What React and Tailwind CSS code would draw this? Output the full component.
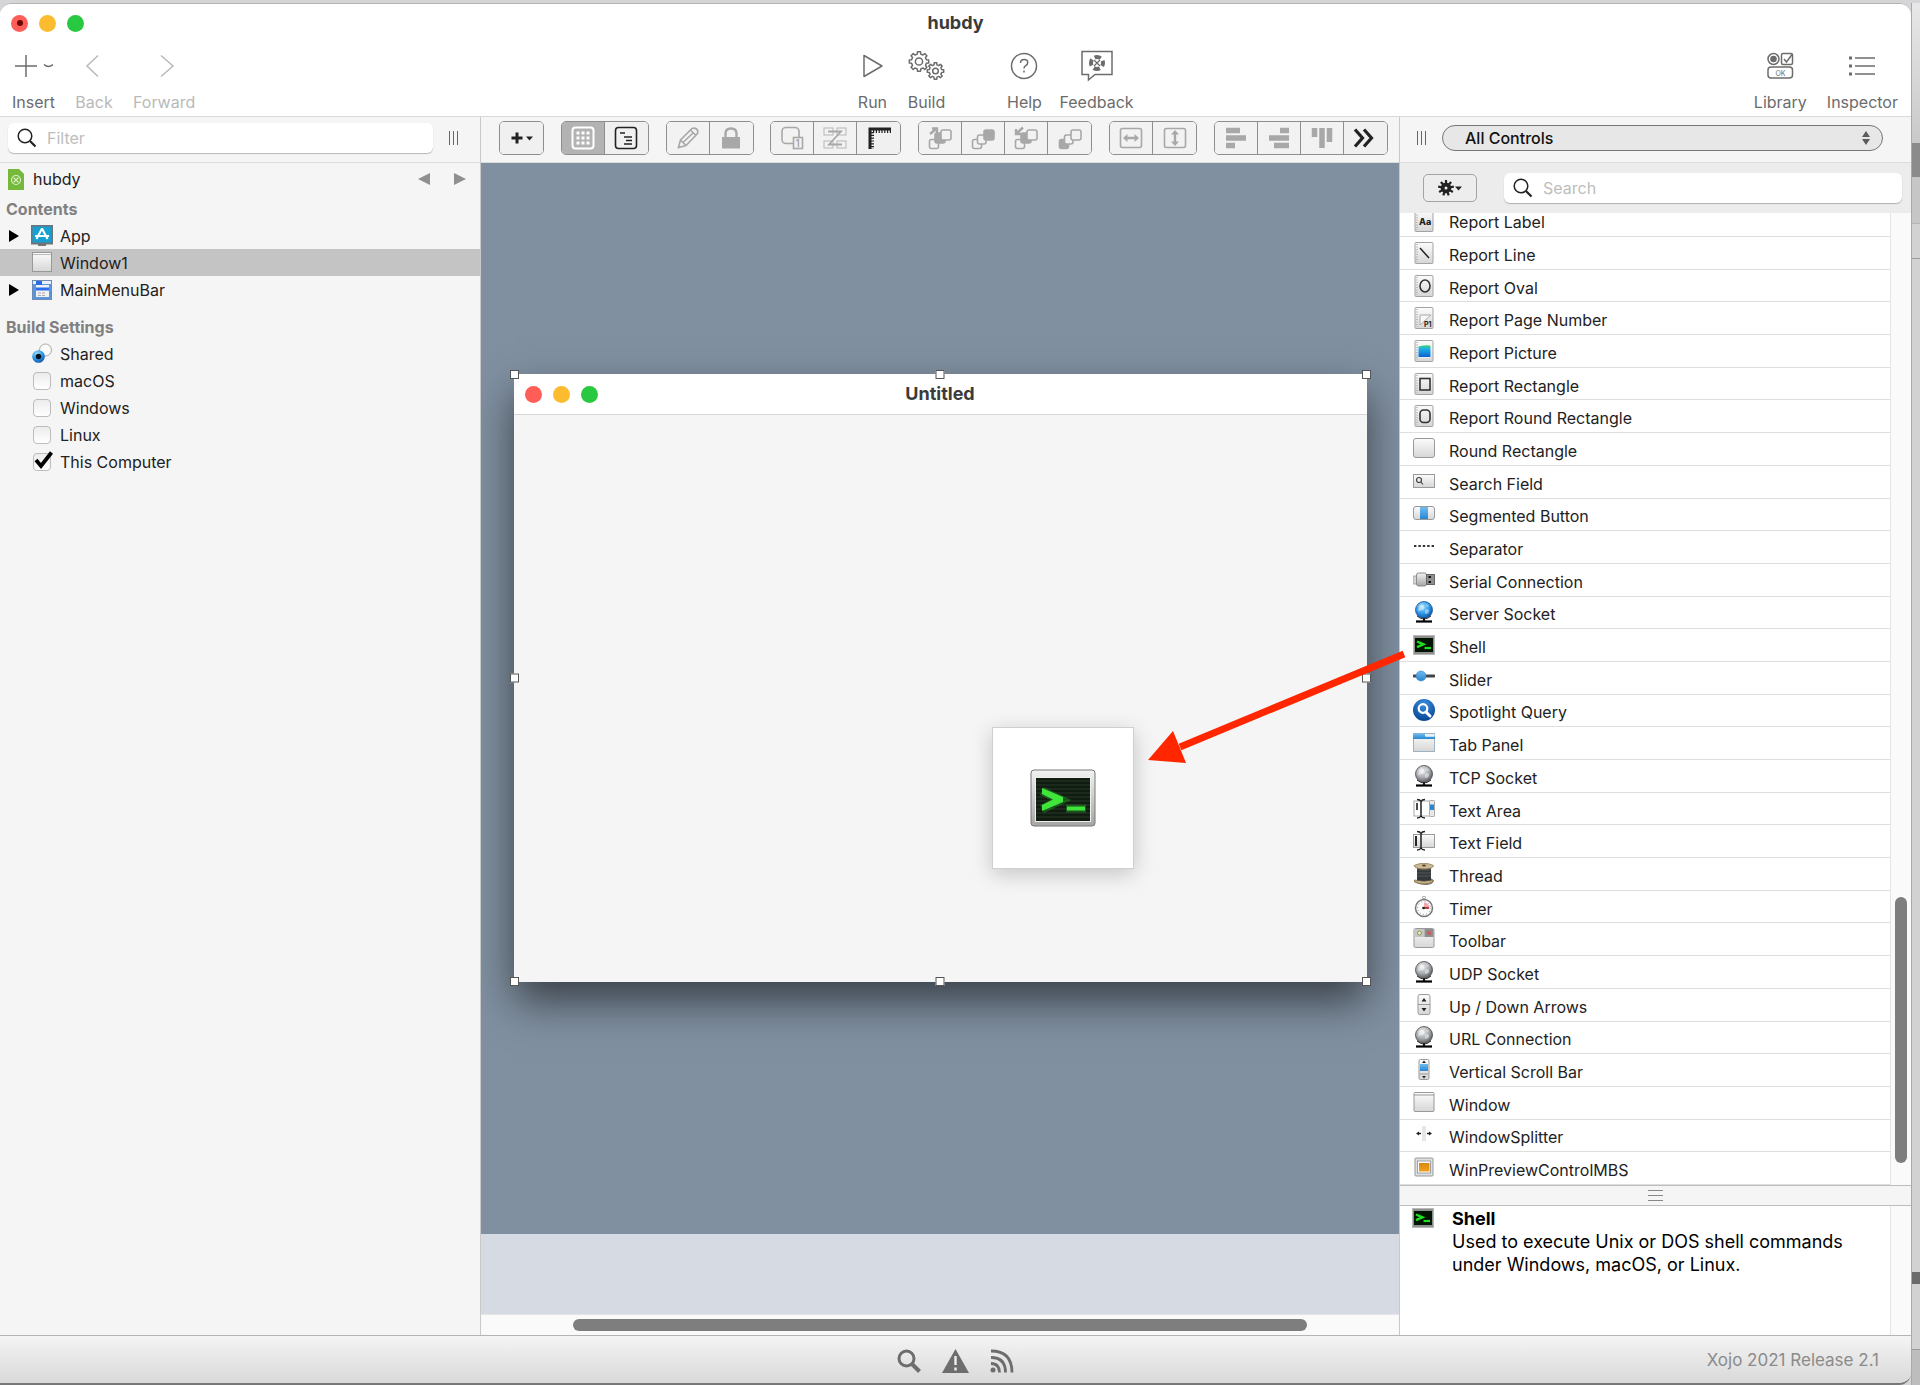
import React from 'react';

// outline of a cog wheel, teeth evenly spread round the centre
function gearPath(cx, cy, outer, inner, teeth) {
    const points = [];
    const step = (Math.PI * 2) / teeth;
    for (let i = 0; i < teeth; i++) {
        const a = i * step - Math.PI / 2;
        [[-0.3, inner], [-0.2, outer], [0.2, outer], [0.3, inner]].forEach(([k, r]) => {
            points.push(`${(cx + r * Math.cos(a + k * step)).toFixed(2)} ${(cy + r * Math.sin(a + k * step)).toFixed(2)}`);
        });
    }
    return `M${points.join('L')}Z`;
}

function SharedGradients() {
    return (
        <svg className="absolute size-0" aria-hidden="true">
            <defs>
                <linearGradient id="paper" x1="0" y1="0" x2="0" y2="1">
                    <stop offset="0" stopColor="#fcfcfc" />
                    <stop offset="1" stopColor="#d6d6d6" />
                </linearGradient>
                <linearGradient id="metal" x1="0" y1="0" x2="0" y2="1">
                    <stop offset="0" stopColor="#f2f2f2" />
                    <stop offset="1" stopColor="#a6a6a6" />
                </linearGradient>
                <linearGradient id="blue" x1="0" y1="0" x2="0" y2="1">
                    <stop offset="0" stopColor="#6cbcf0" />
                    <stop offset="1" stopColor="#2b86d0" />
                </linearGradient>
                <linearGradient id="picture" x1="0" y1="0" x2="0" y2="1">
                    <stop offset="0" stopColor="#3fd668" />
                    <stop offset="0.3" stopColor="#1fb0e8" />
                    <stop offset="1" stopColor="#0b62cf" />
                </linearGradient>
                <linearGradient id="orange" x1="0" y1="0" x2="0" y2="1">
                    <stop offset="0" stopColor="#d98a0c" />
                    <stop offset="1" stopColor="#f0a01c" />
                </linearGradient>
                <radialGradient id="globeBlue" cx="0.4" cy="0.3" r="0.8">
                    <stop offset="0" stopColor="#a5e2fb" />
                    <stop offset="0.5" stopColor="#2f9be6" />
                    <stop offset="1" stopColor="#0a3f94" />
                </radialGradient>
                <radialGradient id="globeGray" cx="0.4" cy="0.3" r="0.8">
                    <stop offset="0" stopColor="#f0f0f0" />
                    <stop offset="0.5" stopColor="#a8abb0" />
                    <stop offset="1" stopColor="#46484c" />
                </radialGradient>
                <radialGradient id="spotlight" cx="0.5" cy="0.25" r="0.8">
                    <stop offset="0" stopColor="#3d8fe0" />
                    <stop offset="1" stopColor="#04408f" />
                </radialGradient>
            </defs>
        </svg>
    );
}

function Icon({ size = 'size-[22px]', box = '0 0 22 22', children }) {
    return (
        <svg className={`${size} shrink-0`} viewBox={box} fill="none" aria-hidden="true">
            {children}
        </svg>
    );
}

/* ---------- library icons ---------- */

function ReportPage({ children }) {
    return (
        <Icon>
            <rect x="2" y="0.5" width="18" height="21" rx="1" fill="url(#paper)" stroke="#a3a3a3" />
            <path d="M4 2v18" stroke="#8d8d8d" strokeDasharray="1 1.5" />
            {children}
        </Icon>
    );
}

function Globe({ fill, base }) {
    return (
        <Icon>
            <circle cx="11" cy="9" r="8.5" fill={fill} stroke={base} strokeWidth="0.7" />
            <path d="M6 5q3-3 5 0t-2 4-4 2zM12 9q4-2 4 1t-4 3zM13 3l3 2-2 1z" fill="#fff" opacity="0.45" />
            <path d="M4 15q7 6 14 0" stroke="#333" strokeWidth="1" />
            <path d="M11 17.500v3" stroke="#111" strokeWidth="2" />
            <path d="M3 20.500h16" stroke="#000" strokeWidth="2.200" />
        </Icon>
    );
}

function Terminal() {
    return (
        <Icon>
            <rect x="0.5" y="1.5" width="21" height="19" fill="#8f8f8f" stroke="#b9b9b9" />
            <rect x="2" y="4" width="18" height="14" fill="#021502" />
            <path d="M4 7.500l6.500 2.800L4 13.200" stroke="#1ee01e" strokeWidth="2.400" />
            <path d="M11.500 14h6.500" stroke="#1ee01e" strokeWidth="2.200" />
        </Icon>
    );
}

function TextCursor() {
    return <path d="M4 1.500q3 0 4 2 1-2 4-2M8 3.500v15M4 20q3 0 4-2 1 2 4 2" stroke="#222" strokeWidth="1.500" />;
}

const libraryItems = [
    { name: 'Report Line', icon: <ReportPage><path d="M7 6l9 10" stroke="#222" strokeWidth="1.500" /></ReportPage> },
    { name: 'Report Oval', icon: <ReportPage><ellipse cx="12" cy="11" rx="5" ry="6" stroke="#333" strokeWidth="1.600" /></ReportPage> },
    {
        name: 'Report Page Number',
        icon: (
            <ReportPage>
                <path d="M7 8h11L7 18z" fill="#f7f7f7" stroke="#aaa" />
                <text x="11" y="20" fontSize="7" fontWeight="700" fill="#222" fontFamily="Inter, sans-serif">P1</text>
            </ReportPage>
        ),
    },
    {
        name: 'Report Picture',
        icon: (
            <ReportPage>
                <rect x="5.500" y="5" width="12.500" height="12.500" fill="#fff" />
                <path d="M5.500 6.500q6-2 12-1v11.500h-12z" fill="url(#picture)" />
            </ReportPage>
        ),
    },
    { name: 'Report Rectangle', icon: <ReportPage><rect x="7" y="5.500" width="10" height="11.500" stroke="#333" strokeWidth="1.600" /></ReportPage> },
    { name: 'Report Round Rectangle', icon: <ReportPage><rect x="7" y="5" width="10" height="12.500" rx="3.500" stroke="#333" strokeWidth="1.600" /></ReportPage> },
    { name: 'Round Rectangle', icon: <Icon><rect x="0.5" y="0.5" width="21" height="19" rx="2.500" fill="url(#paper)" stroke="#999" /></Icon> },
    {
        name: 'Search Field',
        icon: (
            <Icon>
                <rect x="0.5" y="3.500" width="21" height="13" fill="url(#paper)" stroke="#9a9a9a" />
                <circle cx="6" cy="9" r="2.500" stroke="#444" strokeWidth="1.200" />
                <path d="M8 11l2 2.500" stroke="#444" strokeWidth="1.200" />
            </Icon>
        ),
    },
    {
        name: 'Segmented Button',
        icon: (
            <Icon>
                <rect x="0.5" y="3.500" width="21" height="13" rx="2.500" fill="url(#paper)" stroke="#999" />
                <rect x="7" y="4" width="8" height="12" fill="url(#blue)" />
            </Icon>
        ),
    },
    { name: 'Separator', icon: <Icon><path d="M1 10h20" stroke="#333" strokeWidth="2" strokeDasharray="2.400 2" /></Icon> },
    {
        name: 'Serial Connection',
        icon: (
            <Icon>
                <path d="M0 7h4v8H0z" fill="#d5d5d5" stroke="#999" strokeWidth="0.800" />
                <rect x="3.500" y="4" width="10" height="13" rx="2" fill="url(#metal)" stroke="#8b8b8b" />
                <rect x="13.500" y="5.500" width="8" height="10" fill="#8f8f8f" stroke="#666" />
                <path d="M15.500 8h2.500M15.500 13h2.500" stroke="#111" strokeWidth="2" />
            </Icon>
        ),
    },
    { name: 'Server Socket', icon: <Globe fill="url(#globeBlue)" base="#0a3f94" /> },
    { name: 'Shell', icon: <Terminal /> },
    {
        name: 'Slider',
        icon: (
            <Icon>
                <path d="M1 9h20" stroke="#444" strokeWidth="3" strokeLinecap="round" />
                <circle cx="8" cy="9" r="5" fill="url(#blue)" stroke="#3b85bd" strokeWidth="0.600" />
            </Icon>
        ),
    },
    {
        name: 'Spotlight Query',
        icon: (
            <Icon>
                <circle cx="11" cy="11" r="11" fill="url(#spotlight)" />
                <circle cx="10" cy="9.500" r="4.300" stroke="#fff" strokeWidth="2.200" />
                <path d="M13 13l4 4" stroke="#fff" strokeWidth="3" strokeLinecap="round" />
            </Icon>
        ),
    },
    {
        name: 'Tab Panel',
        icon: (
            <Icon>
                <rect x="0.5" y="1.500" width="21" height="18" fill="url(#paper)" stroke="#9db2c2" />
                <path d="M0 1.500h12v3h10V7H0z" fill="url(#blue)" />
                <path d="M13 2h8.500v2.500H13z" fill="#e4f1fb" />
            </Icon>
        ),
    },
    { name: 'TCP Socket', icon: <Globe fill="url(#globeGray)" base="#333" /> },
    {
        name: 'Text Area',
        icon: (
            <Icon>
                <rect x="1" y="3" width="20" height="15" fill="#fff" stroke="#aaa" />
                <path d="M4 5v7" stroke="#111" strokeWidth="1.500" />
                <rect x="16.500" y="2.500" width="5" height="16" rx="1" fill="#e8e8e8" stroke="#aaa" />
                <rect x="17" y="6.500" width="4" height="5.500" fill="#2b86d0" />
                <TextCursor />
            </Icon>
        ),
    },
    {
        name: 'Text Field',
        icon: (
            <Icon>
                <rect x="0.5" y="4.500" width="21" height="13" fill="url(#paper)" stroke="#9a9a9a" />
                <path d="M3 6v10" stroke="#111" strokeWidth="1.800" />
                <TextCursor />
            </Icon>
        ),
    },
    {
        name: 'Thread',
        icon: (
            <Icon>
                <path d="M3 19q14 5 17-1l-2-2" stroke="#777" strokeWidth="1.500" />
                <rect x="4" y="4" width="14" height="14" fill="#33373a" />
                <path d="M4 7h14M4 10h14M4 13h14" stroke="#5d6164" strokeWidth="0.800" />
                <path d="M1 2.500Q11-2 20.500 2.500 20 6 11 6 2 6 1 2.500z" fill="#cdb995" stroke="#8d7a55" strokeWidth="0.800" />
                <path d="M1.500 17q9.500 3 18.500 0v2q-9 4-18.500 0z" fill="#c2ab83" stroke="#7d6b48" strokeWidth="0.800" />
                <ellipse cx="11" cy="2.500" rx="2" ry="1" fill="#5a4526" />
            </Icon>
        ),
    },
    {
        name: 'Timer',
        icon: (
            <Icon>
                <circle cx="11" cy="1.500" r="1.500" stroke="#999" />
                <circle cx="11" cy="12" r="8.500" fill="#fafafa" stroke="#777" strokeWidth="1.500" />
                <path d="M11 12V6.500a6 6 0 0 1 5.500 5.500z" fill="#f0a6aa" />
                <path d="M11 12h5" stroke="#a01818" strokeWidth="1.500" />
                <circle cx="11" cy="12" r="6.500" stroke="#777" strokeDasharray="0.700 2.700" />
                <circle cx="10.500" cy="12" r="1.300" fill="#222" />
            </Icon>
        ),
    },
    {
        name: 'Toolbar',
        icon: (
            <Icon>
                <rect x="1" y="0.500" width="20" height="19" rx="1.500" fill="url(#paper)" stroke="#999" />
                <rect x="1.500" y="1" width="10" height="8" fill="#c6c6c6" />
                <rect x="11.500" y="1" width="9" height="8" fill="#8e8e8e" />
                <circle cx="6.500" cy="5" r="2" fill="#e9efb2" stroke="#7b8a4a" strokeWidth="0.800" />
                <ellipse cx="16" cy="5" rx="2.500" ry="2" fill="#c9605d" />
            </Icon>
        ),
    },
    { name: 'UDP Socket', icon: <Globe fill="url(#globeGray)" base="#333" /> },
    {
        name: 'Up / Down Arrows',
        icon: (
            <Icon>
                <rect x="5" y="0.500" width="12" height="20" rx="2" fill="url(#paper)" stroke="#999" />
                <path d="M5 10.500h12" stroke="#999" />
                <path d="M11 4l2.500 3.500h-5zM11 17.500l2.500-3.500h-5z" fill="#222" />
            </Icon>
        ),
    },
    { name: 'URL Connection', icon: <Globe fill="url(#globeGray)" base="#333" /> },
    {
        name: 'Vertical Scroll Bar',
        icon: (
            <Icon>
                <rect x="6" y="0.500" width="10" height="20" rx="1.500" fill="url(#paper)" stroke="#999" />
                <rect x="7" y="5" width="8" height="7" fill="url(#blue)" />
                <path d="M6.500 15h9" stroke="#999" />
                <path d="M11 1.500l2 2.500H9zM11 19.500l2-2.500H9z" fill="#222" />
            </Icon>
        ),
    },
    {
        name: 'Window',
        icon: (
            <Icon>
                <rect x="1" y="0.500" width="20" height="19" rx="1" fill="url(#paper)" stroke="#999" />
                <path d="M1 3h20" stroke="#999" />
            </Icon>
        ),
    },
    {
        name: 'WindowSplitter',
        icon: (
            <Icon>
                <rect x="9" y="2" width="4" height="15" fill="#e6e6e6" />
                <path d="M8 9.500H5M14 9.500h3" stroke="#222" strokeWidth="1.400" />
                <path d="M3 9.500l3-2v4zM19 9.500l-3-2v4z" fill="#222" />
            </Icon>
        ),
    },
    {
        name: 'WinPreviewControlMBS',
        icon: (
            <Icon>
                <rect x="2" y="1" width="18" height="18" rx="1" fill="#dcdee1" stroke="#999" />
                <rect x="4.500" y="4" width="13" height="12" fill="#fff" stroke="#8d8d8d" strokeWidth="0.800" />
                <rect x="6" y="6" width="10.500" height="8.500" fill="url(#orange)" />
            </Icon>
        ),
    },
];

/* ---------- window chrome ---------- */

function TrafficLights({ edited }) {
    return (
        <div className="flex gap-[11px]">
            <button aria-label="Close" className="flex size-[17px] items-center justify-center rounded-full bg-[#ff5d58]">
                {edited && <span className="size-[6px] rounded-full bg-[#6b0804]" />}
            </button>
            <button aria-label="Minimize" className="size-[17px] rounded-full bg-[#fdbc2f]" />
            <button aria-label="Zoom" className="size-[17px] rounded-full bg-[#28c840]" />
        </div>
    );
}

function ToolbarButton({ label, disabled, children }) {
    return (
        <button disabled={disabled} className={`flex flex-col items-center gap-[9px] ${disabled ? 'text-[#b9b9b9]' : 'text-[#6c6c6c]'}`}>
            <svg className="h-[34px] w-[38px]" viewBox="0 0 38 34" fill="none" stroke="currentColor" strokeWidth="1.500" aria-hidden="true">
                {children}
            </svg>
            <span className="text-base leading-5">{label}</span>
        </button>
    );
}

function Header() {
    return (
        <header className="flex flex-col border-b border-[#dadada] bg-white">
            <div className="grid h-[38px] grid-cols-[1fr_auto_1fr] items-center px-[11px]">
                <TrafficLights edited />
                <h1 className="text-lg font-bold text-[#3b3b3b]">hubdy</h1>
            </div>
            <div className="flex items-start justify-between pt-[7px] pr-[13px] pb-1 pl-3">
                <div className="flex gap-5 pr-[38px]">
                    <ToolbarButton label="Insert">
                        <path d="M11 6v22M0 17h22M29 15.500q4.500 4 9 0" />
                    </ToolbarButton>
                    <ToolbarButton label="Back" disabled>
                        <path d="M23 6.500L12 17l11 10.500" />
                    </ToolbarButton>
                    <ToolbarButton label="Forward" disabled>
                        <path d="M16 6.500L28 17 16 27.500" />
                    </ToolbarButton>
                </div>
                <div className="flex gap-4">
                    <ToolbarButton label="Run">
                        <path d="M11 6.500v21L29 17z" strokeLinejoin="round" />
                    </ToolbarButton>
                    <ToolbarButton label="Build">
                        <path d={gearPath(12, 12.500, 9.800, 7.600, 8)} strokeLinejoin="round" />
                        <circle cx="12" cy="12.500" r="3.600" />
                        <path d={gearPath(28.500, 22, 8.300, 6.300, 8)} strokeLinejoin="round" />
                        <circle cx="28.500" cy="22" r="2.800" />
                    </ToolbarButton>
                    <span className="w-7" />
                    <ToolbarButton label="Help">
                        <circle cx="19" cy="17" r="12.500" />
                        <path d="M15.500 14q0-3.500 3.700-3.500 3.500 0 3.500 3 0 2-2 3.200-1.700 1-1.700 2.800M19 21.500v2" />
                    </ToolbarButton>
                    <ToolbarButton label="Feedback">
                        <path d="M4 2.500h30v23H17L10.500 31v-5.500H4z" />
                        <circle cx="19" cy="14" r="6" strokeWidth="4" strokeDasharray="6.400 3.020" strokeDashoffset="3.200" />
                        <path d="M16 11l6 6M22 11l-6 6" strokeWidth="1.200" />
                    </ToolbarButton>
                </div>
                <div className="flex gap-5">
                    <ToolbarButton label="Library">
                        <circle cx="12.500" cy="10" r="5.500" />
                        <circle cx="12.500" cy="10" r="3.300" fill="currentColor" stroke="none" />
                        <rect x="20.500" y="4.500" width="11" height="11" rx="1.500" />
                        <path d="M23 10l2.500 3L31 5.500" />
                        <rect x="7" y="18" width="24.500" height="11" rx="3" />
                        <text x="14.500" y="26.500" fontSize="7" fill="currentColor" stroke="none">OK</text>
                    </ToolbarButton>
                    <ToolbarButton label="Inspector">
                        <path d="M12 9h20M12 17h20M12 25h20" />
                        <path d="M6 9h3M6 17h3M6 25h3" strokeWidth="3" />
                    </ToolbarButton>
                </div>
            </div>
        </header>
    );
}

function Grip() {
    return (
        <span className="flex gap-[3px]">
            <span className="h-[14px] w-px bg-[#666]" />
            <span className="h-[14px] w-px bg-[#666]" />
            <span className="h-[14px] w-px bg-[#666]" />
        </span>
    );
}

function SearchBox({ id, label, className }) {
    return (
        <div className={`flex h-[30px] items-center gap-[10px] rounded-md bg-white pl-[9px] shadow-[0_1px_1px_rgba(0,0,0,0.25)] ${className}`}>
            <label htmlFor={id} aria-label={label}>
                <svg className="size-5 shrink-0" viewBox="0 0 20 20" fill="none" stroke="#222" aria-hidden="true">
                    <circle cx="8" cy="8" r="6.800" strokeWidth="1.500" />
                    <path d="M13 13l5.500 5.500" strokeWidth="2.200" />
                </svg>
            </label>
            <input id={id} type="text" placeholder={label} aria-label={label} className="min-w-0 flex-1 bg-transparent text-base outline-none placeholder:text-[#bdbdbd]" />
        </div>
    );
}

/* ---------- navigator ---------- */

function Disclosure({ name }) {
    return (
        <button aria-label={`Expand ${name}`} className="flex w-[14px] justify-center">
            <svg className="h-3 w-[10px]" viewBox="0 0 10 12" aria-hidden="true"><path d="M0 0l10 6-10 6z" fill="#000" /></svg>
        </button>
    );
}

function NavRow({ name, icon, selected, expandable }) {
    return (
        <li className={`flex h-[27px] items-center pl-[7px] ${selected ? 'bg-[#c4c4c4]' : ''}`}>
            {expandable ? <Disclosure name={name} /> : <span className="w-[14px]" />}
            <span className="ml-[10px] flex w-[22px] justify-center">{icon}</span>
            <span className="ml-[7px] text-base text-[#222]">{name}</span>
        </li>
    );
}

function BuildTarget({ name, checked }) {
    const id = `target-${name.replace(' ', '-')}`;
    return (
        <li className="flex h-[27px] items-center pl-[33px]">
            <span className="relative flex size-[18px]">
                <input
                    id={id}
                    type="checkbox"
                    defaultChecked={checked}
                    className="peer size-[18px] appearance-none rounded border border-[#bcbcbc] bg-gradient-to-b from-[#ececec] to-white"
                />
                <svg className="pointer-events-none absolute -top-[3px] left-0 hidden h-5 w-[21px] peer-checked:block" viewBox="0 0 21 20" fill="none" aria-hidden="true">
                    <path d="M3 10l5 6L18.500 2.500" stroke="#000" strokeWidth="3.800" />
                </svg>
            </span>
            <label htmlFor={id} className="ml-[9px] text-base text-[#222]">{name}</label>
        </li>
    );
}

function Navigator() {
    return (
        <aside className="relative z-10 flex w-[481px] shrink-0 flex-col border-r border-[#c9c9c9] bg-[#f5f5f5]">
            <div className="flex h-[46px] items-center gap-4 border-b border-[#dcdcdc] pr-[22px] pb-[3px] pl-2">
                <SearchBox id="filter" label="Filter" className="flex-1" />
                <Grip />
            </div>
            <div className="flex h-8 items-center pr-[14px] pl-2">
                <svg className="h-[21px] w-4" viewBox="0 0 16 21" fill="none" aria-hidden="true">
                    <path d="M0 0h11l5 5v16H0z" fill="#74b83c" />
                    <circle cx="8" cy="11" r="4.500" stroke="#d9f0c4" strokeWidth="1.200" />
                    <path d="M5.500 8.500l5 5M10.500 8.500l-5 5" stroke="#d9f0c4" strokeWidth="1.200" />
                </svg>
                <span className="ml-[9px] flex-1 text-base text-[#222]">hubdy</span>
                <div className="flex gap-6">
                    <button aria-label="Previous location">
                        <svg className="size-3" viewBox="0 0 12 12" aria-hidden="true"><path d="M12 0v12L0 6z" fill="#8f8f8f" /></svg>
                    </button>
                    <button aria-label="Next location">
                        <svg className="size-3" viewBox="0 0 12 12" aria-hidden="true"><path d="M0 0v12l12-6z" fill="#8f8f8f" /></svg>
                    </button>
                </div>
            </div>
            <h2 className="h-[27px] pl-[6px] text-base leading-7 font-bold text-[#808080]">Contents</h2>
            <ul>
                <NavRow
                    name="App"
                    expandable
                    icon={
                        <Icon>
                            <path d="M7 18h8v3H7z" fill="#777" />
                            <rect x="0.500" y="0.500" width="21" height="18" fill="#17a0d0" stroke="#6f7478" strokeWidth="2" />
                            <path d="M11 3.500L5.500 14M11 3.500L16.500 14M4 11h14" stroke="#fff" strokeWidth="2" />
                        </Icon>
                    }
                />
                <NavRow
                    name="Window1"
                    selected
                    icon={
                        <Icon>
                            <rect x="1.500" y="0.500" width="19" height="19" fill="url(#paper)" stroke="#999" />
                            <path d="M2 2.500h18" stroke="#bbb" />
                        </Icon>
                    }
                />
                <NavRow
                    name="MainMenuBar"
                    expandable
                    icon={
                        <Icon>
                            <rect x="1.500" y="1.500" width="19" height="19" fill="#5b95e0" stroke="#6d8cb5" />
                            <path d="M2 3.500h18" stroke="#e8f0fa" strokeWidth="3" />
                            <path d="M5 2h6v4H5z" fill="#2c6be0" />
                            <path d="M5 6h13v12H5z" fill="#f1f1f1" />
                            <path d="M5 10h13" stroke="#2a6ff0" strokeWidth="3" />
                            <path d="M7 14h7M7 16.500h8" stroke="#aaa" strokeDasharray="3 1" />
                        </Icon>
                    }
                />
            </ul>
            <h2 className="mt-[10px] h-[27px] pl-[6px] text-base leading-7 font-bold text-[#808080]">Build Settings</h2>
            <ul>
                <NavRow
                    name="Shared"
                    icon={
                        <Icon>
                            <circle cx="14.500" cy="7" r="6" fill="#fafafa" stroke="#aaa" />
                            <circle cx="7.500" cy="13.500" r="6.300" fill="url(#globeBlue)" />
                            <circle cx="7.500" cy="13.500" r="2.800" fill="#04121f" />
                        </Icon>
                    }
                />
                <BuildTarget name="macOS" />
                <BuildTarget name="Windows" />
                <BuildTarget name="Linux" />
                <BuildTarget name="This Computer" checked />
            </ul>
        </aside>
    );
}

/* ---------- layout editor ---------- */

function ToolGroup({ children }) {
    return <div className="flex h-[34px] divide-x divide-[#8e8e8e] overflow-hidden rounded-[5px] border border-[#8e8e8e]">{children}</div>;
}

function Tool({ label, tone = 'off', children }) {
    const tones = {
        off: 'bg-[#f2f2f2] text-[#a8a8a8]',
        on: 'bg-[#f0f0f0] text-[#222]',
        pressed: 'bg-[#b3b3b3] text-white',
    };
    return (
        <button aria-label={label} disabled={tone === 'off'} className={`flex w-[43px] items-center justify-center ${tones[tone]}`}>
            <svg className="size-6" viewBox="0 0 24 24" fill="none" stroke="currentColor" strokeWidth="1.600" aria-hidden="true">
                {children}
            </svg>
        </button>
    );
}

function StackedSquares({ front, middle, back }) {
    return (
        <>
            <rect x="1.500" y="13.500" width="9" height="9" rx="2" fill={front ? 'currentColor' : 'none'} />
            {middle && <rect x="7" y="7" width="10" height="10" rx="2" fill="currentColor" />}
            {!middle && <rect x="6.500" y="9" width="8.500" height="9" rx="2" fill="#f2f2f2" />}
            <rect x="13" y="4" width="10" height="10" rx="2" fill={back ? 'currentColor' : '#f2f2f2'} />
        </>
    );
}

function EditorToolbar() {
    return (
        <div className="flex h-[46px] items-center justify-between border-b border-[#dcdcdc] bg-[#f5f5f5] pr-[11px] pb-[3px] pl-[18px]">
            <ToolGroup>
                <Tool label="Add" tone="on">
                    <path d="M7 6.500v11M1.500 12h11" strokeWidth="3" />
                    <path d="M16 10.500h7l-3.500 4z" fill="currentColor" stroke="none" />
                </Tool>
            </ToolGroup>
            <ToolGroup>
                <Tool label="View layout" tone="pressed">
                    <rect x="1.500" y="1.500" width="21" height="21" rx="3" strokeWidth="2" />
                    <path d="M5.500 7h13M5.500 12h13M5.500 17h13" strokeWidth="3" strokeDasharray="3 2" />
                </Tool>
                <Tool label="View code" tone="on">
                    <rect x="1.500" y="1.500" width="21" height="21" rx="3" />
                    <path d="M6 7h5M10 11h8M12 14.500h6M10 18h8" />
                </Tool>
            </ToolGroup>
            <ToolGroup>
                <Tool label="Edit">
                    <path d="M2.500 21.500l2-7.500L16 2.500q2.500-1 4.500 .500t1 4.500L10 19.500zM4.500 14l5.500 5.500M14.500 4l5.500 5.500M7 16.500L17.500 6.500" />
                </Tool>
                <Tool label="Lock">
                    <path d="M3 11h18v11.500H3z" fill="currentColor" stroke="none" />
                    <path d="M6.500 12V7.500q0-5 5.500-5t5.500 5V12" strokeWidth="2.400" />
                </Tool>
            </ToolGroup>
            <ToolGroup>
                <Tool label="Tab order">
                    <rect x="2" y="1.500" width="17" height="16" rx="4" />
                    <rect x="13.500" y="11.500" width="9" height="11" fill="#f2f2f2" />
                    <text x="15.500" y="21" fontSize="10" fontWeight="600" fill="currentColor" stroke="none">1</text>
                </Tool>
                <Tool label="Show tab order">
                    <g strokeWidth="1" opacity="0.800">
                        <rect x="1" y="2" width="9" height="7" />
                        <rect x="14" y="2" width="9" height="7" />
                        <rect x="1" y="15" width="9" height="7" />
                        <rect x="14" y="15" width="9" height="7" />
                    </g>
                    <path d="M5 5.500h13L6 18.500h13" strokeWidth="1.800" />
                </Tool>
                <Tool label="Rulers" tone="on">
                    <path d="M3 23V3h21" strokeWidth="3" />
                    <path d="M6 5.500h18" strokeWidth="3" strokeDasharray="1.200 1.600" />
                    <path d="M5.500 6v17" strokeWidth="3" strokeDasharray="1.200 1.600" />
                </Tool>
            </ToolGroup>
            <ToolGroup>
                <Tool label="Move forward">
                    <StackedSquares middle />
                    <path d="M2 8l6-5M4 2.500h5v5" strokeWidth="2.400" />
                </Tool>
                <Tool label="Move to front">
                    <StackedSquares back />
                </Tool>
                <Tool label="Move backward">
                    <StackedSquares middle />
                    <path d="M9 1.500L3 7M2 3v5h5" strokeWidth="2.400" />
                </Tool>
                <Tool label="Move to back">
                    <StackedSquares front />
                </Tool>
            </ToolGroup>
            <ToolGroup>
                <Tool label="Fill width">
                    <rect x="1.500" y="2.500" width="21" height="19" rx="2" />
                    <path d="M6 12h12" strokeWidth="2.400" />
                    <path d="M4 12l4.500-4v8zM20 12l-4.500-4v8z" fill="currentColor" stroke="none" />
                </Tool>
                <Tool label="Fill height">
                    <rect x="1.500" y="2.500" width="21" height="19" rx="2" />
                    <path d="M12 7v10" strokeWidth="2.400" />
                    <path d="M12 4l-4 4.500h8zM12 20l-4-4.500h8z" fill="currentColor" stroke="none" />
                </Tool>
            </ToolGroup>
            <ToolGroup>
                <Tool label="Align left">
                    <path d="M2 4.500h14M2 12h20M2 19.500h9" strokeWidth="5.500" />
                </Tool>
                <Tool label="Align right">
                    <path d="M22 4.500h-9M22 12H2M22 19.500H7" strokeWidth="5.500" />
                </Tool>
                <Tool label="Align top">
                    <path d="M4.500 2v9M12 2v20M19.500 2v14" strokeWidth="5.500" />
                </Tool>
                <Tool label="More tools" tone="on">
                    <path d="M2 3.500l7.500 8.500L2 20.500M11 3.500l7.500 8.500-7.500 8.500" strokeWidth="3.200" />
                </Tool>
            </ToolGroup>
        </div>
    );
}

const handles = [
    '-top-1 -left-1',
    '-top-1 left-1/2 -translate-x-1/2',
    '-top-1 -right-1',
    'top-1/2 -left-1 -translate-y-1/2',
    'top-1/2 -right-1 -translate-y-1/2',
    '-bottom-1 -left-1',
    '-bottom-1 left-1/2 -translate-x-1/2',
    '-bottom-1 -right-1',
];

function DesignWindow() {
    return (
        <div className="relative h-[608px] w-[853px] bg-[#f5f5f5] shadow-[0_20px_40px_rgba(0,0,0,0.55)]">
            <div className="grid h-[41px] grid-cols-[1fr_auto_1fr] items-center border-b border-[#d6d6d6] bg-white px-[11px]">
                <TrafficLights />
                <h2 className="text-lg font-bold text-[#3b3b3b]">Untitled</h2>
            </div>
            {/* control being dropped on the form */}
            <div className="absolute top-[353px] left-[478px] flex size-[142px] items-center justify-center border border-[#cfcfcf] bg-white shadow-[0_5px_20px_rgba(0,0,0,0.2)]">
                <svg className="h-[58px] w-[66px]" viewBox="0 0 66 58" fill="none" aria-hidden="true">
                    <rect x="1" y="1" width="64" height="56" rx="3" fill="url(#metal)" stroke="#777" />
                    <rect x="5.500" y="8.500" width="55" height="44" fill="#101c10" stroke="#eee" />
                    {[12, 16, 20, 24, 28, 32, 36, 40, 44, 48].map(y => (
                        <path key={y} d={`M6 ${y}h54`} stroke="#28382a" />
                    ))}
                    <g stroke="#2fd12f" opacity="0.3">
                        <path d="M12 22l19 9-19 9" strokeWidth="9" />
                        <path d="M36 39.500h20" strokeWidth="8" />
                    </g>
                    <path d="M12 19v6l11 5.500L12 36v6l21-9v-5z" fill="#3fe53a" />
                    <path d="M37 39.500h18" stroke="#3fe53a" strokeWidth="4" />
                </svg>
            </div>
            {handles.map(place => (
                <span key={place} className={`absolute size-[9px] border border-[#555] bg-white ${place}`} />
            ))}
            <svg className="pointer-events-none absolute top-[270px] left-[630px] z-20 h-[122px] w-[264px]" viewBox="0 0 264 122" fill="#ff2600" aria-hidden="true">
                <path d="M36 103L260 10" stroke="#ff2600" strokeWidth="7" />
                <path d="M4 116L29 87l13 32z" />
            </svg>
        </div>
    );
}

function Editor() {
    return (
        <main className="flex min-w-0 flex-1 flex-col">
            <EditorToolbar />
            <div className="flex flex-1 justify-center bg-[#8090a1] pt-[211px] pb-10">
                <DesignWindow />
            </div>
            <div className="h-20 bg-[#d6dae2]" />
            <div className="border-t border-[#e4e4e4] bg-[#fafafa] px-[10%] py-1">
                <div className="h-3 rounded-full bg-[#7e7e7e]" />
            </div>
        </main>
    );
}

/* ---------- library ---------- */

function Library() {
    return (
        <aside className="relative flex w-[512px] shrink-0 flex-col border-l border-[#c9c9c9] bg-white">
            <div className="flex h-[46px] items-center gap-4 border-b border-[#dcdcdc] bg-[#f5f5f5] pr-7 pb-[3px] pl-[17px]">
                <Grip />
                <div className="relative flex-1">
                    <select aria-label="Library set" className="block h-[26px] w-full appearance-none rounded-full border border-[#767676] bg-[#e7e7e7] pl-[22px] text-base leading-5 font-medium text-[#111]">
                        <option>All Controls</option>
                    </select>
                    <svg className="pointer-events-none absolute top-[6px] right-[13px] h-[14px] w-2" viewBox="0 0 8 14" fill="#5c5c5c" aria-hidden="true">
                        <path d="M4 0l4 6H0zM4 14l4-6H0z" />
                    </svg>
                </div>
            </div>
            <div className="flex h-[50px] items-center justify-between bg-[#ececec] pr-[9px] pl-[23px]">
                <button aria-label="Library options" className="flex h-7 w-[54px] items-center justify-center rounded-[5px] border border-[#a3a3a3] bg-[#ededed]">
                    <svg className="h-4 w-6" viewBox="0 0 24 16" fill="#222" aria-hidden="true">
                        <path d={gearPath(8, 8, 8, 5.300, 9)} />
                        <circle cx="8" cy="8" r="1.500" fill="#ededed" />
                        <path d="M17 6.500h7l-3.500 4z" />
                    </svg>
                </button>
                <SearchBox id="library-search" label="Search" className="w-[398px]" />
            </div>
            <div className="flex flex-1">
                <ul className="flex flex-1 flex-col">
                    {/* scrolled half out of view */}
                    <li className="flex h-6 items-end gap-[14px] overflow-hidden border-b border-[#dedede] pb-1 pl-[13px]">
                        <ReportPage>
                            <text x="6" y="14.500" fontSize="9" fontWeight="800" fill="#222" fontFamily="Inter, sans-serif">Aa</text>
                        </ReportPage>
                        <span className="text-base leading-5 text-[#222]">Report Label</span>
                    </li>
                    {libraryItems.map(item => (
                        <li key={item.name} className="flex min-h-[30px] flex-1 items-center gap-[14px] border-b border-[#dedede] pl-[13px]">
                            {item.icon}
                            <span className="pt-1 text-base leading-5 text-[#222]">{item.name}</span>
                        </li>
                    ))}
                </ul>
                <div className="flex w-[21px] flex-col items-center justify-end border-l border-[#e4e4e4] bg-[#fafafa] pb-[22px]">
                    <div className="h-[266px] w-3 rounded-full bg-[#7e7e7e]" />
                </div>
            </div>
            <div className="flex h-[21px] flex-col items-center justify-center gap-1 border-y border-[#bdbdbd] bg-[#f5f5f5]">
                <span className="h-px w-[15px] bg-[#888]" />
                <span className="h-px w-[15px] bg-[#888]" />
                <span className="h-px w-[15px] bg-[#888]" />
            </div>
            <div className="flex h-[129px]">
                <div className="flex flex-1 gap-[18px] pt-px pl-3">
                    <Terminal />
                    <div className="text-lg leading-[23px] text-black">
                        <h3 className="font-bold">Shell</h3>
                        <p>Used to execute Unix or DOS shell commands<br />under Windows, macOS, or Linux.</p>
                    </div>
                </div>
                <div className="w-[21px] border-l border-[#e4e4e4] bg-[#fafafa]" />
            </div>
        </aside>
    );
}

function StatusBar() {
    return (
        <footer className="grid h-12 grid-cols-[1fr_auto_1fr] items-center border-t border-[#b5b5b5] bg-gradient-to-b from-[#f4f4f4] to-[#d9d9d9] px-8 pt-[2px]">
            <span />
            <div className="flex items-center gap-[21px] text-[#6d6d6d]">
                <button aria-label="Find">
                    <Icon size="size-6" box="0 0 24 24">
                        <circle cx="9.500" cy="9.500" r="7.500" stroke="currentColor" strokeWidth="3" />
                        <path d="M15 15l7.500 7.500" stroke="currentColor" strokeWidth="4" />
                    </Icon>
                </button>
                <button aria-label="Issues">
                    <Icon size="h-6 w-[27px]" box="0 0 27 24">
                        <path d="M13.500 0L27 24H0z" fill="currentColor" />
                        <path d="M13.500 7v9M13.500 18.500v3" stroke="#eee" strokeWidth="2.400" />
                    </Icon>
                </button>
                <button aria-label="Messages">
                    <Icon size="size-6" box="0 0 24 24">
                        <circle cx="3" cy="21" r="2.500" fill="currentColor" />
                        <path d="M1 14.500q8.500 0 8.500 9M1 8.500q14.500 0 14.500 15M1 2q21 0 21 21.500" stroke="currentColor" strokeWidth="2.800" />
                    </Icon>
                </button>
            </div>
            <span className="text-right text-[17px] text-[#8b8b8b]">Xojo 2021 Release 2.1</span>
        </footer>
    );
}

// sliver of the desktop and the windows behind
function DesktopEdge() {
    return (
        <div className="flex w-[9px] shrink-0 flex-col border-l border-[#a9a9a9] bg-[#d2d2d2]">
            <div className="h-[140px] bg-gradient-to-b from-[#e8e8e8] to-[#c9c9c9]" />
            <div className="h-[34px] bg-[#8b8b8b]" />
            <div className="h-[47px] border-b border-[#b5b5b5] bg-[#c6c6c6]" />
            <div className="h-[35px] border-b border-[#999]" />
            <div className="flex-1" />
            <div className="h-3 bg-[#6c6c6c]" />
            <div className="h-[66px] border-b border-[#999]" />
            <div className="h-[35px] bg-[#bdbdbd]" />
        </div>
    );
}

export default function App() {
    return (
        <div className="flex min-h-screen flex-col bg-[#d5d5d8] pt-[3px] font-['Inter','Liberation_Sans',sans-serif]">
            <SharedGradients />
            <div className="flex flex-1">
                <div className="flex min-w-0 flex-1 flex-col overflow-hidden rounded-t-xl rounded-br-xl border-t border-b-2 border-t-[#b4b4b4] border-b-[#777] bg-[#f5f5f5]">
                    <Header />
                    <div className="flex flex-1">
                        <Navigator />
                        <Editor />
                        <Library />
                    </div>
                    <StatusBar />
                </div>
                <DesktopEdge />
            </div>
        </div>
    );
}
